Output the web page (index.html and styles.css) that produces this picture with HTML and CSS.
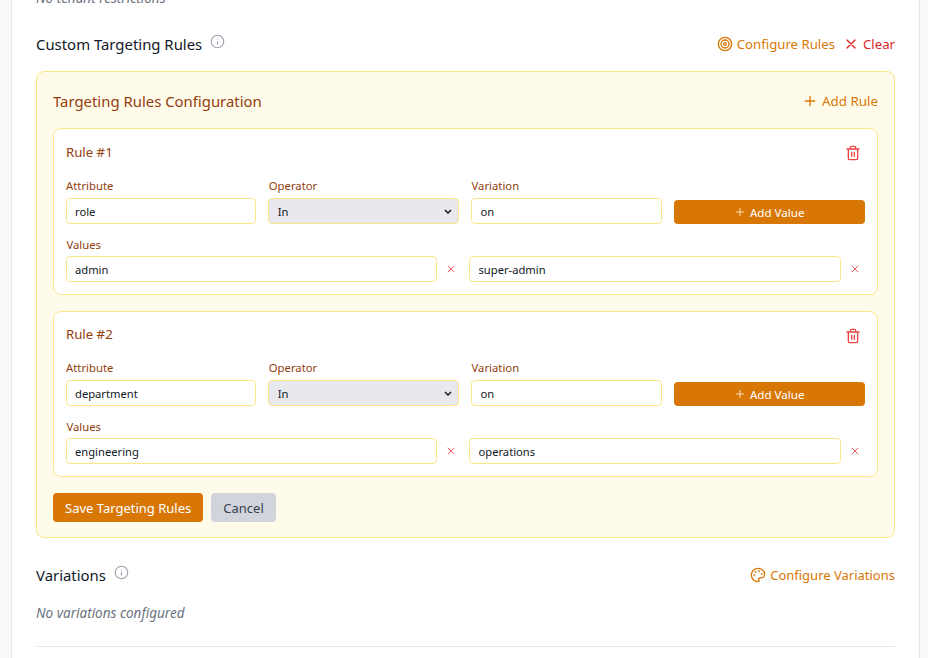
FILE: index.html
```html
<!DOCTYPE html>
<html lang="en">
<head>
  <meta charset="UTF-8">
  <title>Custom Targeting Rules</title>
  <link rel="stylesheet" href="styles.css">
</head>
<body>

  <div class="card">
    <p class="empty cut">No tenant restrictions</p>

    <div class="section-head">
      <h3>Custom Targeting Rules
        <svg class="info" viewBox="0 0 24 24"><circle cx="12" cy="12" r="10"/><path d="M12 16v-4M12 8h.01"/></svg>
      </h3>
      <div class="actions">
        <a class="link orange">
          <svg viewBox="0 0 24 24"><circle cx="12" cy="12" r="10"/><circle cx="12" cy="12" r="6"/><circle cx="12" cy="12" r="2"/></svg>
          Configure Rules
        </a>
        <a class="link red">
          <svg viewBox="0 0 24 24"><path d="M18 6L6 18M6 6l12 12"/></svg>
          Clear
        </a>
      </div>
    </div>

    <div class="config">
      <div class="config-head">
        <h4>Targeting Rules Configuration</h4>
        <a class="link orange add-rule">
          <svg viewBox="0 0 24 24"><path d="M12 5v14M5 12h14"/></svg>
          Add Rule
        </a>
      </div>

      <div class="rule">
        <div class="rule-head">
          <h5>Rule #1</h5>
          <svg class="trash" viewBox="0 0 24 24"><path d="M3 6h18M19 6v14a2 2 0 0 1-2 2H7a2 2 0 0 1-2-2V6M8 6V4a2 2 0 0 1 2-2h4a2 2 0 0 1 2 2v2M10 11v6M14 11v6"/></svg>
        </div>
        <div class="fields">
          <div><label>Attribute</label><input type="text" value="role"></div>
          <div><label>Operator</label><select><option>In</option></select></div>
          <div><label>Variation</label><input type="text" value="on"></div>
          <button class="add-value"><svg viewBox="0 0 24 24"><path d="M12 5v14M5 12h14"/></svg>Add Value</button>
        </div>
        <label>Values</label>
        <div class="values">
          <div class="value"><input type="text" value="admin"><svg class="remove" viewBox="0 0 24 24"><path d="M18 6L6 18M6 6l12 12"/></svg></div>
          <div class="value"><input type="text" value="super-admin"><svg class="remove" viewBox="0 0 24 24"><path d="M18 6L6 18M6 6l12 12"/></svg></div>
        </div>
      </div>

      <div class="rule">
        <div class="rule-head">
          <h5>Rule #2</h5>
          <svg class="trash" viewBox="0 0 24 24"><path d="M3 6h18M19 6v14a2 2 0 0 1-2 2H7a2 2 0 0 1-2-2V6M8 6V4a2 2 0 0 1 2-2h4a2 2 0 0 1 2 2v2M10 11v6M14 11v6"/></svg>
        </div>
        <div class="fields">
          <div><label>Attribute</label><input type="text" value="department"></div>
          <div><label>Operator</label><select><option>In</option></select></div>
          <div><label>Variation</label><input type="text" value="on"></div>
          <button class="add-value"><svg viewBox="0 0 24 24"><path d="M12 5v14M5 12h14"/></svg>Add Value</button>
        </div>
        <label>Values</label>
        <div class="values">
          <div class="value"><input type="text" value="engineering"><svg class="remove" viewBox="0 0 24 24"><path d="M18 6L6 18M6 6l12 12"/></svg></div>
          <div class="value"><input type="text" value="operations"><svg class="remove" viewBox="0 0 24 24"><path d="M18 6L6 18M6 6l12 12"/></svg></div>
        </div>
      </div>

      <div class="buttons">
        <button class="save">Save Targeting Rules</button>
        <button class="cancel">Cancel</button>
      </div>
    </div>

    <div class="section-head variations">
      <h3>Variations
        <svg class="info" viewBox="0 0 24 24"><circle cx="12" cy="12" r="10"/><path d="M12 16v-4M12 8h.01"/></svg>
      </h3>
      <a class="link orange variations-link">
        <svg viewBox="0 0 24 24"><circle cx="13.5" cy="6.5" r=".5"/><circle cx="17.5" cy="10.5" r=".5"/><circle cx="8.5" cy="7.5" r=".5"/><circle cx="6.5" cy="12.5" r=".5"/><path d="M12 2C6.5 2 2 6.5 2 12s4.5 10 10 10c.926 0 1.648-.746 1.648-1.688 0-.437-.18-.835-.437-1.125-.29-.289-.438-.652-.438-1.125a1.64 1.64 0 0 1 1.668-1.668h1.996c3.051 0 5.555-2.503 5.555-5.554C21.965 6.012 17.461 2 12 2z"/></svg>
        Configure Variations
      </a>
    </div>
    <p class="empty">No variations configured</p>
    <hr>
  </div>

</body>
</html>
```

FILE: styles.css
```css
html, body {
  height: 658px;
  overflow: hidden;
}

body {
  margin: 0;
  background-color: #f9fafb;
  color: #111827;
  font-family: "Noto Sans", "Open Sans", Arial, sans-serif;
  font-size: 14px;
}

svg {
  fill: none;
  stroke: currentColor;
  stroke-width: 2;
  stroke-linecap: round;
  stroke-linejoin: round;
  flex-shrink: 0;
}

.card {
  width: 859px;
  margin: -12px 0 0 11px;
  padding: 0 24px;
  background: #fff;
  border: 1px solid #e5e7eb;
  border-width: 0 1px;
}

.empty {
  margin: 0;
  color: #6b7280;
  font-style: italic;
  font-size: 13.5px;
  line-height: 20px;
}

.cut {
  height: 16px;
}

.section-head {
  display: flex;
  align-items: center;
  justify-content: space-between;
  height: 28px;
  margin-top: 26px;
}

.section-head h3 {
  display: flex;
  align-items: center;
  gap: 8px;
  margin: 0;
  font-size: 14.9px;
  font-weight: 400;
}

.info {
  width: 15px;
  height: 15px;
  margin-top: -5px;
  color: #9ca3af;
  stroke-width: 1.8;
}

.actions {
  display: flex;
  gap: 8px;
}

.link {
  display: flex;
  align-items: center;
  gap: 4px;
  font-size: 13.2px;
}

.link svg {
  width: 16px;
  height: 16px;
}

.add-rule {
  font-size: 13.4px;
}

.variations-link {
  font-size: 13px;
}

.orange {
  color: #d97706;
}

.red {
  color: #dc2626;
}

.config {
  margin-top: 13px;
  padding: 15px 16px 16px;
  height: 434px;
  background: #fffbeb;
  border: 1px solid #fde68a;
  border-radius: 8px;
}

.config-head {
  display: flex;
  align-items: center;
  justify-content: space-between;
  height: 28px;
  margin-bottom: 13px;
}

.config-head h4 {
  margin: 0;
  color: #92400e;
  font-size: 14.9px;
  font-weight: 400;
}

.rule {
  height: 141px;
  margin-bottom: 16px;
  padding: 12px;
  background: #fff;
  border: 1px solid #fde68a;
  border-radius: 8px;
}

.rule + .rule {
  height: 140px;
}

.rule-head {
  display: flex;
  align-items: center;
  justify-content: space-between;
  height: 22px;
  margin-bottom: 15px;
}

.rule + .rule .rule-head {
  height: 20px;
  margin-bottom: 16px;
}

.rule-head h5 {
  margin: 0;
  color: #92400e;
  font-size: 13.2px;
  font-weight: 400;
}

.trash {
  align-self: flex-start;
  width: 16px;
  height: 16px;
  margin: 4px 4px 0 0;
  color: #ef4444;
}

label {
  display: block;
  padding-left: .4px;
  color: #92400e;
  font-size: 11.3px;
  line-height: 15px;
  margin-bottom: 5px;
}

.fields + label {
  margin-bottom: 4px;
}

input, select {
  box-sizing: border-box;
  width: 100%;
  height: 26px;
  padding: 0 8px 0 8.4px;
  font-family: inherit;
  font-size: 11.2px;
  color: #111827;
  background: #fff;
  border: 1px solid #fde68a;
  border-radius: 4px;
}

select {
  appearance: none;
  background: #e9e9ed url("data:image/svg+xml,%3Csvg xmlns='http://www.w3.org/2000/svg' width='8' height='5' viewBox='0 0 8 5'%3E%3Cpath d='M1 1l3 3 3-3' fill='none' stroke='%23222' stroke-width='1.6'/%3E%3C/svg%3E") no-repeat right 6px center;
}

.fields {
  display: grid;
  grid-template-columns: repeat(4, 1fr);
  gap: 12px;
  align-items: end;
  margin: 0 .4px 13px -.4px;
}

.add-value {
  display: flex;
  align-items: center;
  justify-content: center;
  gap: 4px;
  height: 24px;
  font-family: inherit;
  font-size: 11.6px;
  color: #fff;
  background: #d97706;
  border: none;
  border-radius: 4px;
}

.add-value svg {
  width: 12px;
  height: 12px;
  color: #fde2b8;
}

.values {
  display: grid;
  grid-template-columns: 1fr 1fr;
  gap: 8px;
  margin: 0 .4px 0 -.4px;
}

.value {
  display: flex;
  align-items: center;
  gap: 8px;
  padding-right: 4px;
}

.remove {
  width: 12px;
  height: 12px;
  color: #ef4444;
  stroke-width: 1.7;
}

.buttons {
  display: flex;
  gap: 8px;
}

.buttons button {
  height: 29px;
  padding: 0 12px;
  font-family: inherit;
  font-size: 13px;
  border: none;
  border-radius: 4px;
}

.save {
  color: #fff;
  background: #d97706;
}

.cancel {
  color: #374151;
  background: #d1d5db;
}

.variations {
  margin-top: 23px;
}

.variations + .empty {
  margin-top: 14px;
}

hr {
  margin: 23px 0 0;
  border: none;
  border-top: 1px solid #e5e7eb;
  padding-bottom: 30px;
}
```
